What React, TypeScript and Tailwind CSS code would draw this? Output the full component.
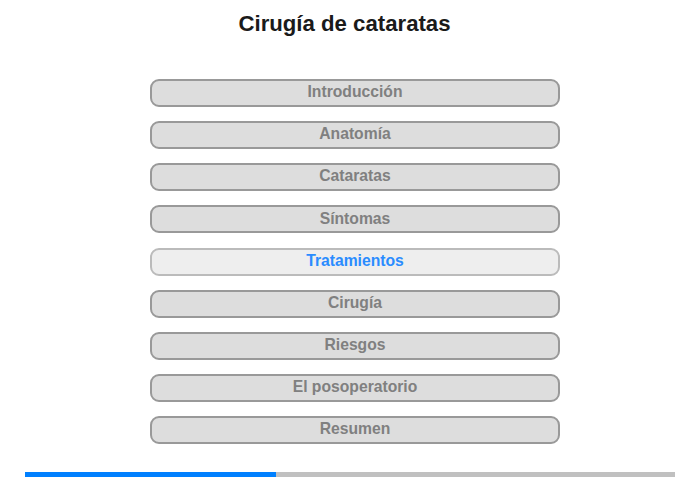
import React from "react";

const items = [
  "Introducción",
  "Anatomía",
  "Cataratas",
  "Síntomas",
  "Tratamientos",
  "Cirugía",
  "Riesgos",
  "El posoperatorio",
  "Resumen",
];

export default function App() {
  const active = 4;
  return (
    <div
      className="w-[700px] h-[480px] bg-white flex flex-col overflow-hidden"
      style={{ fontFamily: '"Liberation Sans", Arial, sans-serif' }}
    >
      <div className="pt-[11px] h-[79px] flex justify-center pr-[11px]">
        <h1 className="text-[22.2px] leading-[25px] font-bold text-[#1a1a1a]">
          Cirugía de cataratas
        </h1>
      </div>
      <div className="flex flex-col gap-[14.125px] ml-[150px] w-[410px]">
        {items.map((t, i) => (
          <div
            key={t}
            className={
              i === active
                ? "h-[28px] pb-[2px] rounded-[9px] border-2 border-[#bbbbbb] bg-[#eeeeee] flex items-center justify-center text-[15.7px] leading-none font-bold text-[#2a8cff]"
                : "h-[28px] pb-[2px] rounded-[9px] border-2 border-[#999999] bg-[#dddddd] flex items-center justify-center text-[15.7px] leading-none font-bold text-[#808080]"
            }
          >
            {t}
          </div>
        ))}
      </div>
      <div className="mt-[28px] ml-[25px] w-[650px] h-[5px] bg-[#c0c0c0] flex">
        <div className="h-full w-[251px] bg-[#0080ff]" />
      </div>
    </div>
  );
}
